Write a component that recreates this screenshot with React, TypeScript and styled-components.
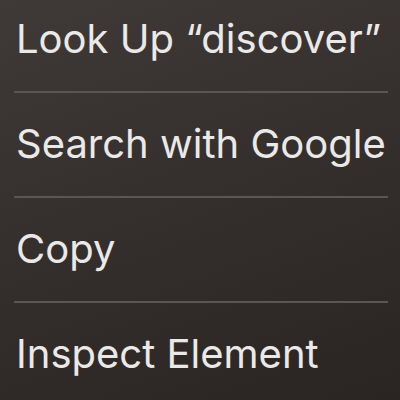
import React from "react";
import styled, { createGlobalStyle } from "styled-components";

const Global = createGlobalStyle`
  html, body {
    margin: 0;
    padding: 0;
    width: 400px;
    height: 400px;
    overflow: hidden;
    background: #2c2724;
  }
`;

const Menu = styled.div`
  width: 400px;
  height: 400px;
  box-sizing: border-box;
  padding: 13px 12px 0 14px;
  display: flex;
  flex-direction: column;
  background: linear-gradient(160deg, #3f3a37 0%, #342f2c 50%, #2a2522 100%);
  font-family: Inter, "Noto Sans", sans-serif;
  color: #ebe9e8;
`;

const Item = styled.div`
  font-size: 40px;
  line-height: 52px;
  height: 52px;
  padding-left: 2px;
  white-space: nowrap;
`;

const Separator = styled.div`
  height: 2px;
  margin: 26px 0 25px 0;
  background: #5b5653;
`;

const items = ["Look Up \u201Cdiscover\u201D", "Search with Google", "Copy", "Inspect Element"];

export default function App() {
  return (
    <>
      <Global />
      <Menu>
        {items.map((label, i) => (
          <React.Fragment key={label}>
            {i > 0 && <Separator />}
            <Item>{label}</Item>
          </React.Fragment>
        ))}
      </Menu>
    </>
  );
}
